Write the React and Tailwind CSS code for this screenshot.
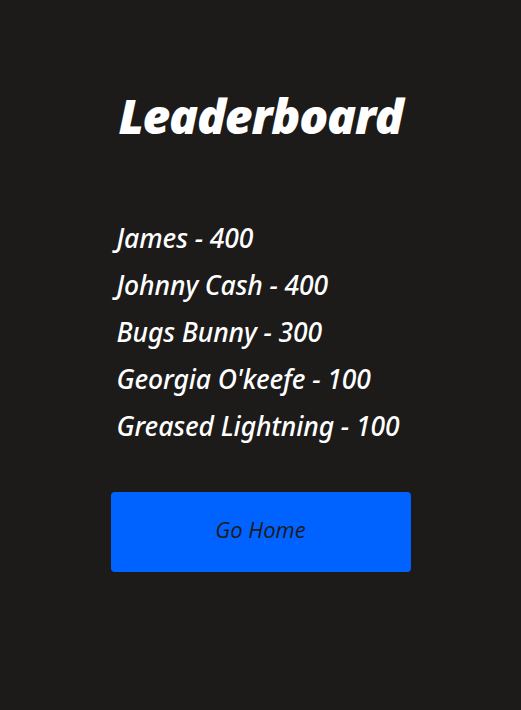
export default function App() {
  const items = [
    "James - 400",
    "Johnny Cash - 400",
    "Bugs Bunny - 300",
    "Georgia O'keefe - 100",
    "Greased Lightning - 100",
  ];
  return (
    <div className="min-h-[710px] w-full bg-[#1c1b1a] flex justify-center" style={{ fontFamily: '"Open Sans", "Noto Sans", sans-serif' }}>
      <div className="w-[300px] flex flex-col pt-[84px]">
        <h1 className="text-center text-white italic font-extrabold text-[48px] leading-[64px] tracking-[-1.2px]">Leaderboard</h1>
        <ul className="mt-[67px] pl-[6px] flex flex-col" style={{ fontFamily: '"Noto Sans", sans-serif' }}>
          {items.map((t) => (
            <li key={t} className="text-white italic font-medium text-[26.5px] leading-[47px] tracking-[-0.1px]">{t}</li>
          ))}
        </ul>
        <button className="mt-[42px] h-[80px] w-[300px] rounded-[4px] bg-[#0062ff] text-[#1c1b1a] italic text-[22px] pb-[5px]">Go Home</button>
      </div>
    </div>
  );
}
